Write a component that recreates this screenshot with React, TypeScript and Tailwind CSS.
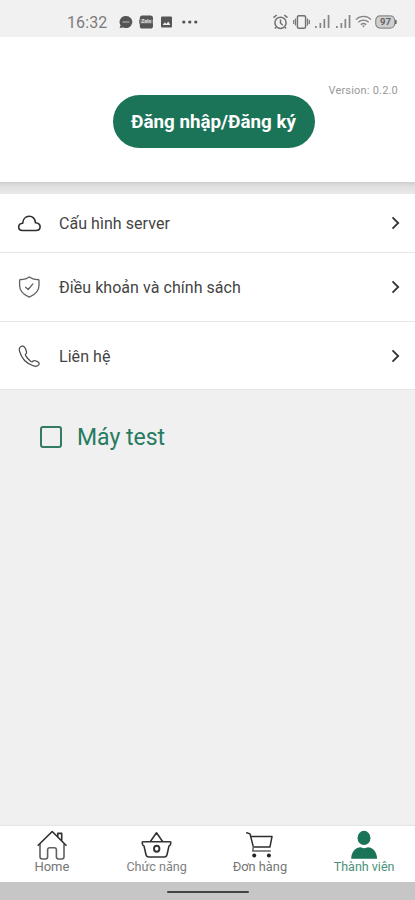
import type { ReactNode } from 'react';

const GREEN = '#1b7358';

function AlarmIcon() {
  return (
    <svg width="16" height="16" viewBox="0 0 16 16" fill="none" stroke="#707070" strokeWidth="1.5">
      <circle cx="8.500" cy="8.8" r="5.6" />
      <path d="M1.500 3.600 4.700 1M15.500 3.600 12.300 1M8.500 5.600V9l2.200 2.200M4.100 13.200 2.900 14.600M12.900 13.200l1.200 1.400" />
    </svg>
  );
}

function VibrateIcon() {
  return (
    <svg width="17" height="16" viewBox="0 0 17 16" fill="none" stroke="#707070">
      <rect x="4.4" y="1.7" width="8.2" height="12.6" rx="1.6" strokeWidth="1.5" />
      <path d="M2.4 4.5v7M.7 6v4M14.6 4.5v7M16.3 6v4" strokeWidth="1.1" />
    </svg>
  );
}

function SignalIcon() {
  return (
    <svg width="15" height="14" viewBox="0 0 15 14" fill="#858585">
      <rect x="0" y="11" width="1.7" height="2" />
      <rect x="4.5" y="8" width="1.7" height="5" />
      <rect x="8.5" y="4" width="1.7" height="9" />
      <rect x="12.7" y="0" width="1.7" height="13" />
    </svg>
  );
}

function WifiIcon() {
  return (
    <svg width="17" height="14" viewBox="0 0 17 14" fill="none" stroke="#858585" strokeWidth="1.3">
      <path d="M.9 4.600C5.200.4 11.800.4 16.100 4.600M3.300 7.300c3-2.900 7.400-2.900 10.400 0M5.800 9.800c1.600-1.500 3.800-1.500 5.400 0" />
      <path d="m6.900 10.600 1.600 1.900 1.600-1.900Z" fill="#858585" stroke="none" />
    </svg>
  );
}

function StatusBar() {
  return (
    <div className="flex h-[37px] shrink-0 items-center bg-[#f1f1f1] pt-[7px] pl-[67px]">
      <span className="w-[51px] pt-0.5 text-[16px] leading-5 tracking-[0.1px] text-[#7c7c7c]">16:32</span>
      <svg width="15" height="14" viewBox="0 0 15 14">
        <path d="M8 1a6.2 6 0 1 1-2.600 11.400L1.600 13l1-2.700A6 6 0 0 1 8 1Z" fill="#555" />
        <path d="M4.600 7h6.800" stroke="#999" strokeWidth="1.6" />
      </svg>
      <svg className="ml-1.5" width="15" height="14" viewBox="0 0 15 14">
        <rect x=".8" y=".5" width="13.2" height="13" rx="2.6" fill="#555" />
        <path d="M0 4.600h14v4H0Z" fill="#777" />
        <text x="7.2" y="8.3" textAnchor="middle" fontSize="5" fontWeight="700" fill="#ddd">Zalo</text>
      </svg>
      <svg className="ml-[7px]" width="11" height="12" viewBox="0 0 11 12">
        <rect y=".4" width="11" height="11" rx="1" fill="#555" />
        <path d="m1.700 9 2.200-2.800 1.500 1.700L7.200 5.600 9.400 9Z" fill="#eee" />
      </svg>
      <svg className="ml-2.5" width="16" height="4" viewBox="0 0 16 4" fill="#505050">
        <circle cx="1.8" cy="2" r="1.6" />
        <circle cx="7.8" cy="2" r="1.6" />
        <circle cx="13.8" cy="2" r="1.6" />
      </svg>
      <div className="ml-auto flex items-center pr-[18px]">
        <AlarmIcon />
        <span className="ml-[5px]"><VibrateIcon /></span>
        <span className="ml-[5px]"><SignalIcon /></span>
        <span className="ml-1.5"><SignalIcon /></span>
        <span className="ml-1"><WifiIcon /></span>
        <svg className="ml-[3px]" width="22" height="14" viewBox="0 0 22 14">
          <rect x=".7" y=".9" width="19" height="12.2" rx="4.5" fill="#cfcfcf" stroke="#8b8b8b" strokeWidth="1.2" />
          <rect x="20" y="4.7" width="1.6" height="4.6" rx=".8" fill="#606060" />
          <text x="10.4" y="10.4" textAnchor="middle" fontSize="9.5" fontWeight="700" fill="#636363">97</text>
        </svg>
      </div>
    </div>
  );
}

function CloudIcon() {
  return (
    <svg width="26" height="24" viewBox="0 0 26 24" fill="none" stroke="#2c2c2c" strokeWidth="1.6" strokeLinejoin="round">
      <path d="M6.500 19.500c-2.200 0-3.800-1.400-3.800-3.500 0-2.100 1.600-3.500 4-3.700C7 8.100 9.500 5.200 13.100 5.200c3.400 0 5.900 2.700 6.400 6.600 2.800.2 4.600 1.700 4.600 4 0 2.200-1.700 3.700-4.300 3.700Z" />
    </svg>
  );
}

function ShieldIcon() {
  return (
    <svg width="26" height="24" viewBox="0 0 26 24" fill="none" stroke="#606060" strokeWidth="1.3" strokeLinecap="round" strokeLinejoin="round">
      <path d="M13.300 2c2.500 1.900 5.200 2.700 8.700 2.500.6 0 1 .3 1 .9v4.800c0 5.500-3.500 9.300-9.700 12C7.100 19.500 3.600 15.700 3.600 10.200V5.400c0-.6.400-.9 1-.9 3.500.2 6.200-.6 8.700-2.500Z" />
      <path d="m9.600 12.300 2.600 2.200 4.700-5.600" />
    </svg>
  );
}

function PhoneIcon() {
  return (
    <svg width="26" height="24" viewBox="0 0 26 24" fill="none" stroke="#4a4a4a" strokeWidth="1.2" strokeLinejoin="round">
      <path d="M5.700 2.200C3.700 2.800 2.900 4.700 3.500 7c1.700 6.600 6.700 12.300 13.700 14.800 2.700.9 5 .2 5.900-1.600.3-.7.1-1.200-.4-1.700-1.100-1.100-2.500-1.700-4.200-1.900-.7-.1-1.200.1-1.600.6-.5.7-1.100.8-1.900.3-2.500-1.700-4.200-3.700-5.500-6.100-.4-.8-.2-1.300.4-1.700.6-.4.8-.9.700-1.600-.3-2-1-3.700-2.300-5.200-.7-.8-1.500-1-2.600-.7Z" />
    </svg>
  );
}

function MenuRow({ icon, label, className }: { icon: ReactNode; label: string; className: string }) {
  return (
    <div className={`flex items-center border-b border-[#e6e6e6] bg-white pr-3.5 pl-4 ${className}`}>
      {icon}
      <span className="ml-[17px] pt-0.5 text-[16px] leading-5 tracking-[0.05px] text-[#444]">{label}</span>
      <svg className="ml-auto" width="10" height="14" viewBox="0 0 10 14" fill="none" stroke="#333" strokeWidth="1.8">
        <path d="m1.500 1.400 5.700 5.600-5.700 5.600" />
      </svg>
    </div>
  );
}

function HomeIcon() {
  return (
    <svg width="32" height="32" viewBox="0 0 32 32" fill="none" strokeWidth="1.6" strokeLinejoin="round" strokeLinecap="round">
      <path d="M4 15.500v12.300c0 1.400.8 2.200 2.200 2.200h3.300c1.400 0 2.100-.8 2.100-2.200V21c0-1.500.7-2.200 2.100-2.200h4.600c1.400 0 2.100.7 2.100 2.200v6.800c0 1.400.7 2.200 2.100 2.200h3.300c1.400 0 2.200-.8 2.200-2.200V15.500" stroke="#606060" />
      <path d="M2.200 16.300 16.200 2.500l13.800 13.800M21.800 7.400V4.400h3.900v7" stroke="#2e2e2e" />
    </svg>
  );
}

function BasketIcon() {
  return (
    <svg width="32" height="32" viewBox="0 0 32 32" fill="none" stroke="#333" strokeWidth="1.6" strokeLinejoin="round">
      <path d="M3 12.700h27c.6 0 .9.4.8 1l-.5 2c-.2.700-.6 1-1.300 1.200L27 25.700c-.3 1.500-1.200 2.300-2.700 2.300H8.700c-1.500 0-2.400-.8-2.700-2.300L4 16.900c-.7-.2-1.100-.5-1.300-1.200l-.5-2c-.1-.6.2-1 .8-1ZM10.400 12.500l6.100-8.700 6.100 8.700" />
      <ellipse cx="16.700" cy="19.800" rx="2.700" ry="3" strokeWidth="1.900" />
    </svg>
  );
}

function CartIcon() {
  return (
    <svg width="32" height="32" viewBox="0 0 32 32" fill="none" stroke="#2c2c2c" strokeWidth="1.500" strokeLinejoin="round" strokeLinecap="round">
      <path d="M3.800 3.800 7 4.900l3.400 13.200h16.500L29 7.600H7.800" />
      <path d="m10.400 18.100-.7 3.900h17.600" stroke="#666" />
      <circle cx="11.200" cy="26.600" r="2" fill="#222" stroke="none" />
      <circle cx="25.900" cy="26.600" r="2" fill="#222" stroke="none" />
    </svg>
  );
}

function MemberIcon() {
  return (
    <svg width="32" height="32" viewBox="0 0 32 32" fill={GREEN}>
      <ellipse cx="17" cy="8.900" rx="6.500" ry="7.100" />
      <path d="M4.200 29.800c0-7.200 5-11.600 9.300-11.600 1.300 0 1.800 1 3.700 1s2.500-1 3.700-1c4.400 0 9.200 4.400 9.200 11.600Z" />
    </svg>
  );
}

const TABS = [
  { label: 'Home', icon: <HomeIcon />, text: 'text-[13px] text-[#757575]' },
  { label: 'Chức năng', icon: <BasketIcon />, text: 'pl-0.5 text-[12.6px] text-[#808080]' },
  { label: 'Đơn hàng', icon: <CartIcon />, text: 'pl-px text-[12.8px] text-[#757575]' },
  { label: 'Thành viên', icon: <MemberIcon />, text: 'pl-0.5 text-[12.5px] text-[#4a8f78]' },
];

export default function App() {
  return (
    <div className="flex h-[900px] w-[415px] flex-col overflow-hidden bg-[#f0f0f0] font-['Roboto',sans-serif]">
      <StatusBar />

      <div className="relative flex h-[145px] shrink-0 justify-center bg-white pt-[58px] pl-3">
        <button className="flex h-[53px] w-[202px] items-center justify-center rounded-full bg-[#1b7358] pt-0.5 text-[18.8px] font-bold text-white">
          Đăng nhập/Đăng ký
        </button>
        <span className="absolute top-[47px] right-[17px] text-[11px] leading-[14px] tracking-[0.2px] text-[#999]">Version: 0.2.0</span>
      </div>
      <div className="h-3 shrink-0 bg-linear-to-b from-[#cecece] via-[#e0e0e0] via-35% to-[#e9e9e9]" />

      <MenuRow icon={<CloudIcon />} label="Cấu hình server" className="h-[59px]" />
      <MenuRow icon={<ShieldIcon />} label="Điều khoản và chính sách" className="h-[69px]" />
      <MenuRow icon={<PhoneIcon />} label="Liên hệ" className="h-[68px]" />

      <label className="mt-8 flex items-center pl-10">
        <span className="h-[22px] w-[22px] rounded-[3px] border-2 border-[#347b63]" />
        <span className="ml-[15px] pt-0.5 text-[23px] leading-7 text-[#277b60]">Máy test</span>
      </label>

      <nav className="mt-auto grid h-[56px] shrink-0 grid-cols-4 bg-white shadow-[0_-1px_1px_#e5e5e5]">
        {TABS.map(t => (
          <div key={t.label} className="flex flex-col items-center pt-[3px]">
            {t.icon}
            <span className={`-mt-[2px] leading-4 whitespace-nowrap ${t.text}`}>{t.label}</span>
          </div>
        ))}
      </nav>
      <div className="flex h-[18px] shrink-0 items-center justify-center bg-[#c6c6c6] pt-0.5">
        <div className="h-0.5 w-[82px] rounded-full bg-[#444]" />
      </div>
    </div>
  );
}
